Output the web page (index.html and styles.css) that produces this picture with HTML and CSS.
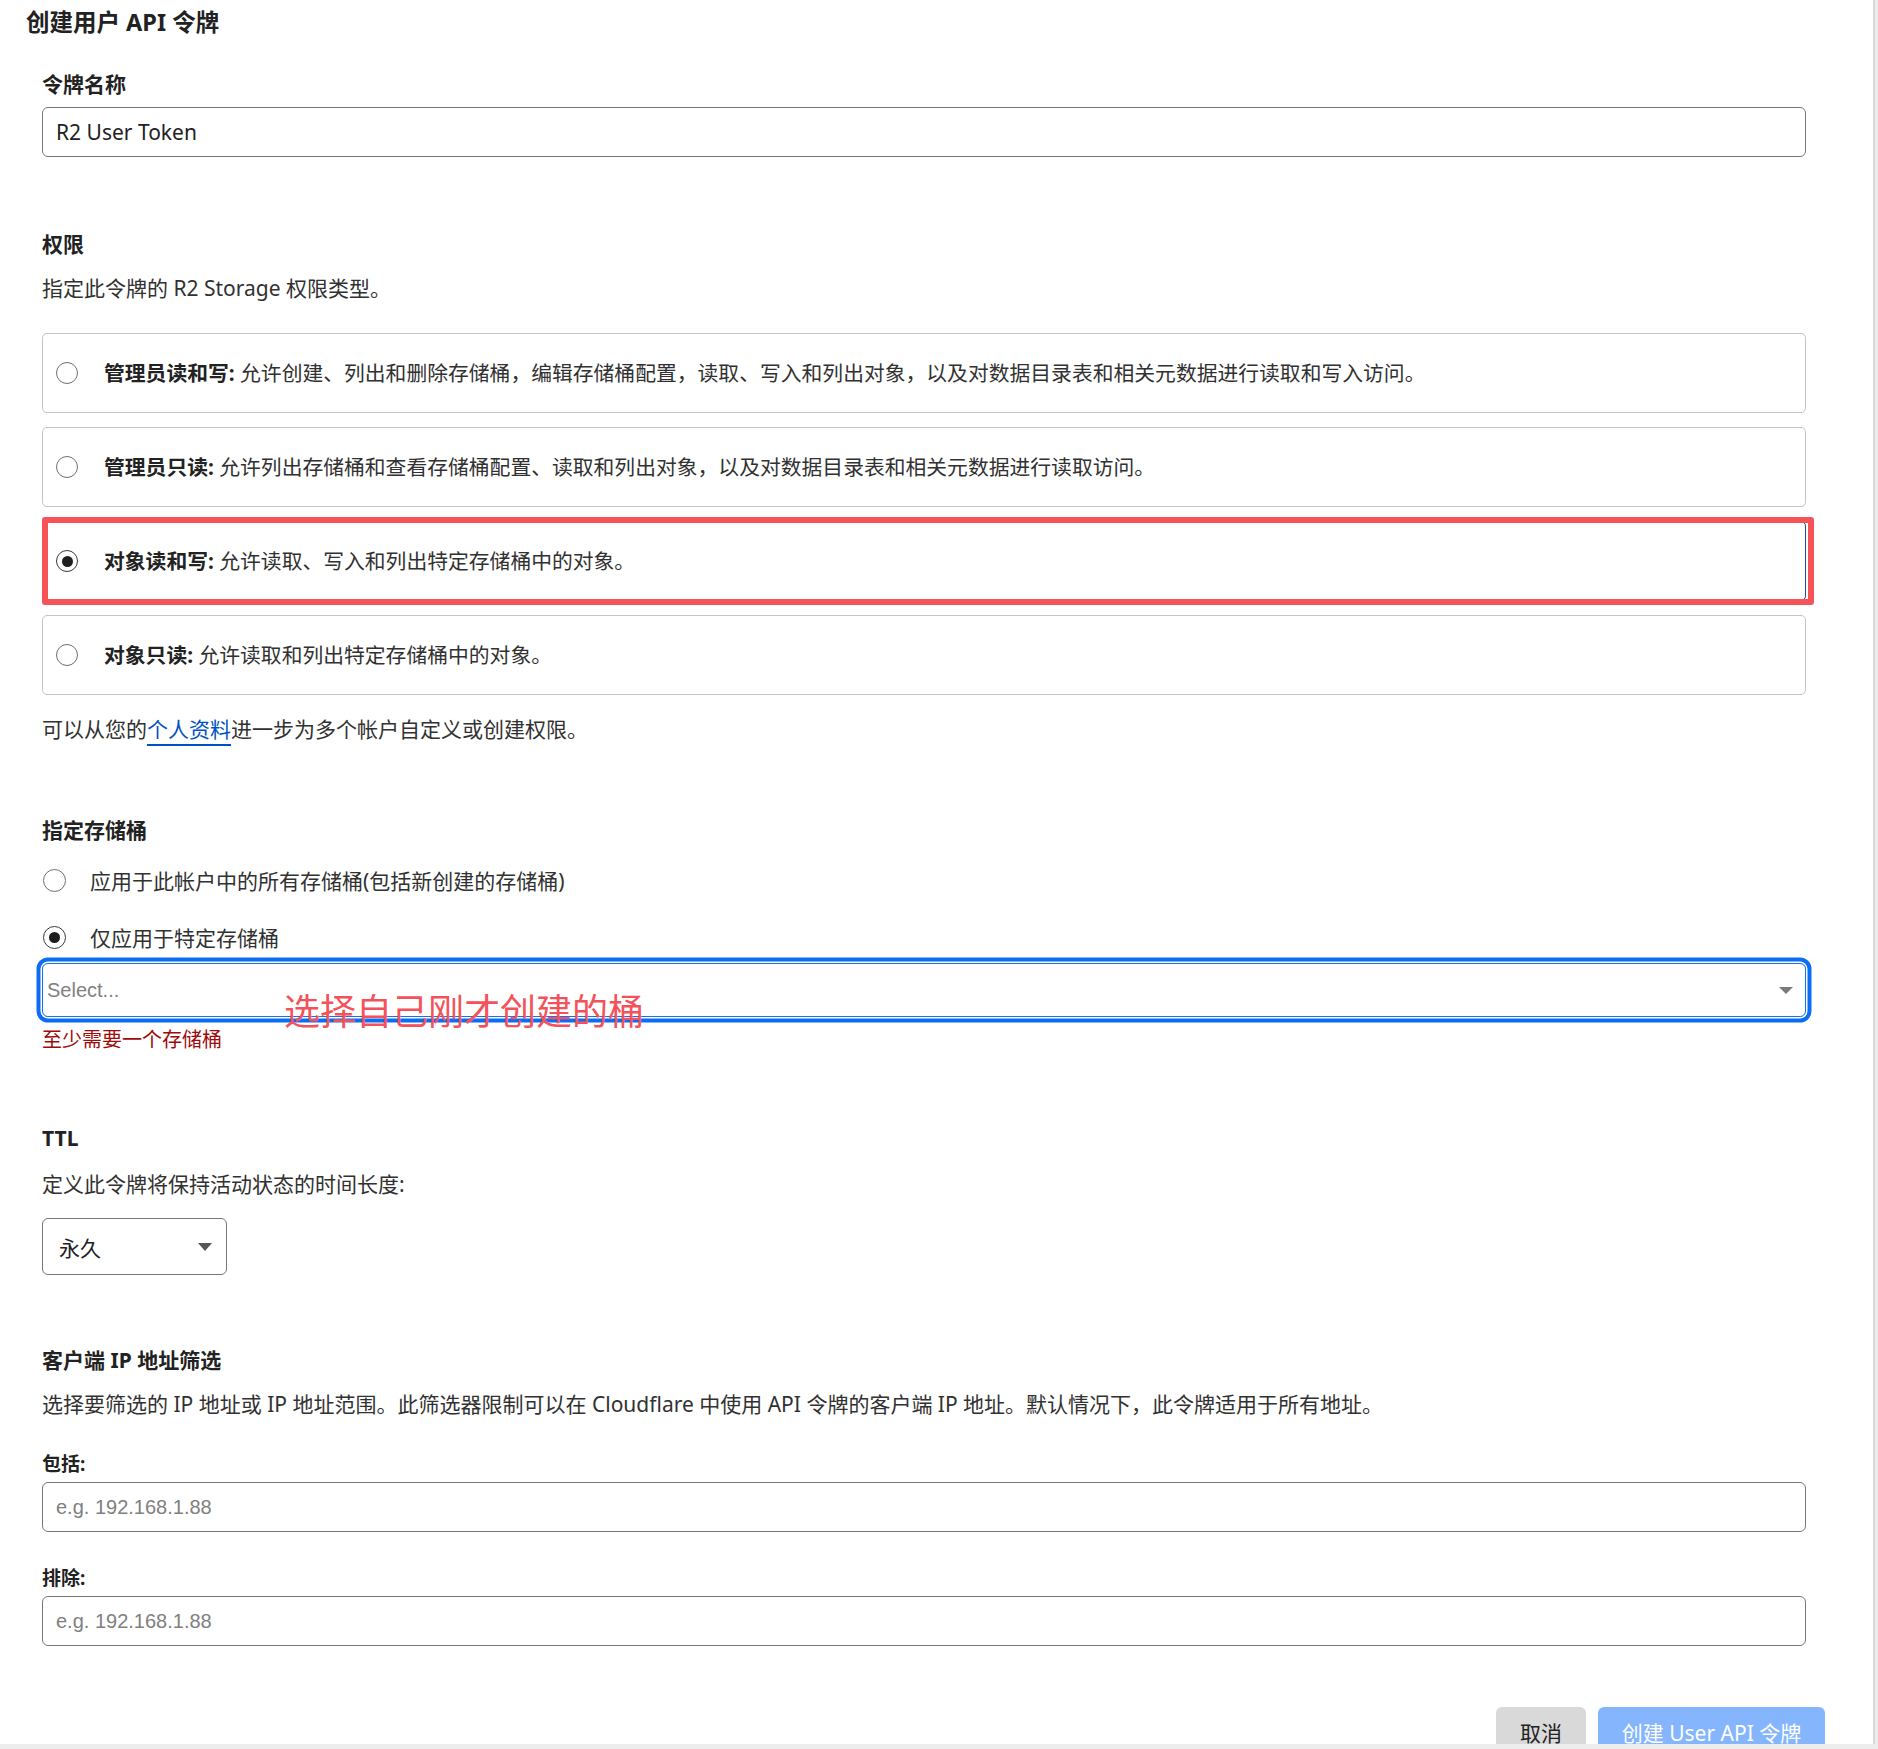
FILE: index.html
```html
<!DOCTYPE html>
<html lang="zh-CN">
<head>
<meta charset="utf-8">
<title>创建用户 API 令牌</title>
<link rel="stylesheet" href="styles.css">
</head>
<body>
<div class="frame">
  <h1 class="title">创建用户 API 令牌</h1>
  <div class="form">
    <section class="sec sec-name">
      <div class="label">令牌名称</div>
      <div class="field"><span class="value">R2 User Token</span></div>
    </section>

    <section class="sec sec-perm">
      <div class="label">权限</div>
      <p class="desc">指定此令牌的 R2 Storage 权限类型。</p>
      <div class="cards">
        <div class="card">
          <span class="radio"></span>
          <span class="card-text"><b>管理员读和写:</b> 允许创建、列出和删除存储桶，编辑存储桶配置，读取、写入和列出对象，以及对数据目录表和相关元数据进行读取和写入访问。</span>
        </div>
        <div class="card">
          <span class="radio"></span>
          <span class="card-text"><b>管理员只读:</b> 允许列出存储桶和查看存储桶配置、读取和列出对象，以及对数据目录表和相关元数据进行读取访问。</span>
        </div>
        <div class="card card-on">
          <span class="radio on"></span>
          <span class="card-text"><b>对象读和写:</b> 允许读取、写入和列出特定存储桶中的对象。</span>
          <span class="mark-box"></span>
        </div>
        <div class="card">
          <span class="radio"></span>
          <span class="card-text"><b>对象只读:</b> 允许读取和列出特定存储桶中的对象。</span>
        </div>
      </div>
      <p class="help">可以从您的<a class="link" href="#">个人资料</a>进一步为多个帐户自定义或创建权限。</p>
    </section>

    <section class="sec sec-bucket">
      <div class="label">指定存储桶</div>
      <div class="opt opt-first"><span class="radio radio-sm"></span><span>应用于此帐户中的所有存储桶(包括新创建的存储桶)</span></div>
      <div class="opt opt-second"><span class="radio radio-sm on"></span><span>仅应用于特定存储桶</span></div>
      <div class="select-wrap">
        <div class="select focus"><span class="placeholder ph-select">Select...</span><span class="caret caret-light"></span></div>
        <span class="annot">选择自己刚才创建的桶</span>
      </div>
      <div class="error">至少需要一个存储桶</div>
    </section>

    <section class="sec sec-ttl">
      <div class="label">TTL</div>
      <p class="desc">定义此令牌将保持活动状态的时间长度:</p>
      <div class="ttl-select"><span class="value">永久</span><span class="caret"></span></div>
    </section>

    <section class="sec sec-ip">
      <div class="label">客户端 IP 地址筛选</div>
      <p class="desc">选择要筛选的 IP 地址或 IP 地址范围。此筛选器限制可以在 Cloudflare 中使用 API 令牌的客户端 IP 地址。默认情况下，此令牌适用于所有地址。</p>
      <div class="sublabel sub-first">包括:</div>
      <div class="field"><span class="placeholder">e.g. 192.168.1.88</span></div>
      <div class="sublabel sub-second">排除:</div>
      <div class="field"><span class="placeholder">e.g. 192.168.1.88</span></div>
    </section>

    <div class="actions">
      <button class="btn btn-cancel" type="button">取消</button>
      <button class="btn btn-create" type="button">创建 User API 令牌</button>
    </div>
  </div>
</div>
</body>
</html>
```

FILE: styles.css
```css
html {
  background: #ededed;
}
body {
  margin: 0;
  font-family: "Noto Sans", "Noto Sans CJK SC", sans-serif;
  color: #313131;
  font-size: 21px;
}
.frame {
  box-sizing: border-box;
  width: 1875px;
  height: 1744px;
  background: #fff;
  border-right: 2px solid #d9d9d9;
  overflow: hidden;
}
.title {
  margin: 0;
  padding: 8px 0 0 26px;
  font-size: 23.5px;
  line-height: 28px;
  font-weight: 700;
  color: #222;
}
.form {
  width: 1764px;
  margin-left: 42px;
}
.label {
  font-size: 21px;
  font-weight: 700;
  line-height: 30px;
  color: #222;
}
.desc, .help {
  margin: 0;
  font-size: 21px;
  line-height: 30px;
  color: #313131;
}
.sec-name { margin-top: 33px; }
.sec-perm { margin-top: 72px; }
.sec-bucket { margin-top: 71px; }
.sec-ttl { margin-top: 70px; }
.sec-ip { margin-top: 70px; }

.sec-perm .desc,
.sec-ip .desc { margin-top: 14px; }
.sec-ttl .desc { margin-top: 16px; }

.field {
  box-sizing: border-box;
  height: 50px;
  margin-top: 8px;
  border: 1px solid #767676;
  border-radius: 6px;
  padding: 0 13px;
  display: flex;
  align-items: center;
}
.value {
  font-size: 21px;
  color: #222;
}
.placeholder {
  font-family: "Liberation Sans", Arial, sans-serif;
  font-size: 20px;
  color: #808080;
}

/* permission cards */
.cards {
  margin-top: 30px;
  display: flex;
  flex-direction: column;
  gap: 14px;
}
.card {
  position: relative;
  box-sizing: border-box;
  height: 80px;
  border: 1px solid #c4c4c4;
  border-radius: 5px;
  padding-left: 13px;
  display: flex;
  align-items: center;
}
.card-on {
  border-color: #1d4f9f;
}
.card-text {
  margin-left: 26px;
  font-size: 20.8px;
  line-height: 30px;
  color: #313131;
}
.card-text b {
  color: #222;
}
.mark-box {
  position: absolute;
  left: -1px;
  top: -5px;
  right: -9px;
  bottom: -5px;
  border: 6px solid #f55356;
  border-radius: 3px;
}

.radio {
  box-sizing: border-box;
  position: relative;
  flex: none;
  width: 22px;
  height: 22px;
  border: 1px solid #6f6f6f;
  border-radius: 50%;
  background: #fff;
}
.radio.on {
  border: 1.5px solid #3a3a3a;
}
.radio.on::after {
  content: "";
  position: absolute;
  left: 50%;
  top: 50%;
  width: 11px;
  height: 11px;
  margin: -5.5px 0 0 -5.5px;
  border-radius: 50%;
  background: #1e1e1e;
}
.radio-sm {
  width: 23px;
  height: 23px;
  margin-left: 1px;
}

.help {
  margin-top: 19px;
}
.link {
  color: #0051c3;
  text-decoration: none;
  border-bottom: 2px solid #0051c3;
  padding-bottom: 1px;
}

/* bucket */
.opt {
  height: 30px;
  display: flex;
  align-items: center;
  gap: 24px;
  font-size: 21px;
  color: #313131;
}
.opt-first { margin-top: 20px; }
.opt-second { margin-top: 27px; }

.select-wrap {
  position: relative;
  margin-top: 11px;
}
.select {
  box-sizing: border-box;
  height: 54px;
  border: 1px solid #1a6ff0;
  border-radius: 6px;
  padding: 0 12px 0 4px;
  display: flex;
  align-items: center;
  justify-content: space-between;
}
.select.focus {
  box-shadow: 0 0 0 1.5px #fff, 0 0 0 5.5px #0a6df4;
}
.caret {
  width: 0;
  height: 0;
  border-left: 7px solid transparent;
  border-right: 7px solid transparent;
  border-top: 8px solid #555;
}
.caret-light {
  border-top: 7px solid #7a7a7a;
}
.annot {
  position: absolute;
  left: 242px;
  top: 24px;
  font-family: "Noto Sans CJK SC", sans-serif;
  font-size: 36px;
  line-height: 44px;
  color: #f4525a;
  white-space: nowrap;
}
.error {
  margin-top: 10px;
  font-size: 20px;
  line-height: 26px;
  color: #9e0b0b;
}

/* ttl */
.ttl-select {
  box-sizing: border-box;
  width: 185px;
  height: 57px;
  margin-top: 19px;
  border: 1px solid #767676;
  border-radius: 6px;
  padding: 0 14px 0 16px;
  display: flex;
  align-items: center;
  justify-content: space-between;
}

/* ip */
.sublabel {
  font-size: 19px;
  font-weight: 700;
  line-height: 26px;
  color: #222;
}
.sub-first { margin-top: 32px; }
.sub-second { margin-top: 33px; }
.sec-ip .field { margin-top: 5px; }

/* actions */
.actions {
  margin-top: 61px;
  margin-right: -19px;
  display: flex;
  justify-content: flex-end;
  gap: 12px;
}
.btn {
  height: 50px;
  border: none;
  border-radius: 6px;
  font-family: "Noto Sans", "Noto Sans CJK SC", sans-serif;
  font-size: 21px;
  padding: 0;
}
.btn-cancel {
  width: 90px;
  background: #d9d9d9;
  color: #222;
}
.btn-create {
  width: 227px;
  background: #85b6fd;
  color: #fff;
}
```
